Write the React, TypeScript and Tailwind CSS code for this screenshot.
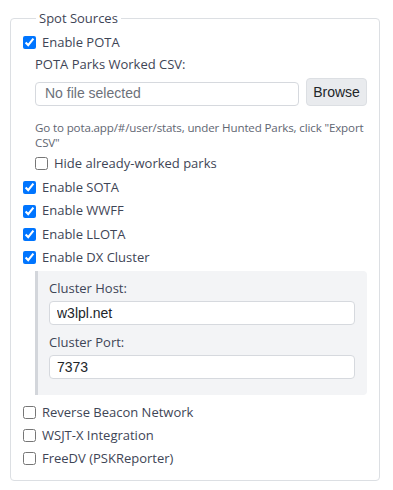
import { useState } from 'react';

interface CheckRowProps {
  label: string;
  checked: boolean;
  onChange: (v: boolean) => void;
  className?: string;
}

function CheckRow({ label, checked, onChange, className = '' }: CheckRowProps) {
  return (
    <label className={`flex items-center h-[23px] gap-[6px] text-[13px] text-[#3e4556] ${className}`}>
      <input
        type="checkbox"
        checked={checked}
        onChange={(e) => onChange(e.target.checked)}
        className="m-0 w-[13px] h-[13px] accent-[#0075ff]"
      />
      <span>{label}</span>
    </label>
  );
}

export default function App() {
  const [pota, setPota] = useState(true);
  const [hideWorked, setHideWorked] = useState(false);
  const [sota, setSota] = useState(true);
  const [wwff, setWwff] = useState(true);
  const [llota, setLlota] = useState(true);
  const [dx, setDx] = useState(true);
  const [rbn, setRbn] = useState(false);
  const [wsjt, setWsjt] = useState(false);
  const [freedv, setFreedv] = useState(false);
  const [host, setHost] = useState('w3lpl.net');
  const [port, setPort] = useState('7373');

  return (
    <div className="w-[393px] h-[490px] bg-white pt-[9px] font-['Open_Sans',sans-serif]">
      <fieldset className="ml-[10px] w-[370px] border border-[#dcdfe3] rounded-[4px] pl-[12px] pr-[12px] pb-[10px]">
        <legend className="ml-[13px] px-[3px] text-[13px] leading-[18px] text-[#3e4556]">Spot Sources</legend>

        {/* POTA */}
        <CheckRow label="Enable POTA" checked={pota} onChange={setPota} className="mt-[4px]" />
        <div className="pl-[12px]">
          <div className="h-[22px] flex items-center text-[13px] text-[#3e4556]">POTA Parks Worked CSV:</div>
          <div className="flex items-center gap-[7px] mt-[2px]">
            <div className="flex-1 h-[24px] mt-[3px] border border-[#d6d9de] rounded-[4px] px-[9px] flex items-center text-[14px] text-[#6c717a] font-['Liberation_Sans',sans-serif]">
              No file selected
            </div>
            <button className="h-[28px] w-[61px] rounded-[4px] bg-[#e9ebee] border border-[#dcdfe3] text-[14px] text-[#212529] font-['Liberation_Sans',sans-serif]">
              Browse
            </button>
          </div>
          <div className="mt-[14px] text-[11.6px] tracking-[-0.15px] leading-[15px] text-[#5f6672]">
            Go to pota.app/#/user/stats, under Hunted Parks, click "Export CSV"
          </div>
          <CheckRow label="Hide already-worked parks" checked={hideWorked} onChange={setHideWorked} className="mt-[2px]" />
        </div>

        <CheckRow label="Enable SOTA" checked={sota} onChange={setSota} className="mt-[1px]" />
        <CheckRow label="Enable WWFF" checked={wwff} onChange={setWwff} className="mt-[0.5px]" />
        <CheckRow label="Enable LLOTA" checked={llota} onChange={setLlota} className="mt-[0.5px]" />
        <CheckRow label="Enable DX Cluster" checked={dx} onChange={setDx} />

        {/* DX cluster settings */}
        <div className="ml-[12px] mt-[2px] bg-[#f3f4f6] border-l-[3px] border-[#d3d6db] rounded-r-[4px] pl-[11px] pr-[12px] pt-[9px] pb-[16px]">
          <div className="h-[18px] flex items-center text-[13px] text-[#3e4556]">Cluster Host:</div>
          <input
            value={host}
            onChange={(e) => setHost(e.target.value)}
            className="mt-[3px] w-full h-[24px] bg-white border border-[#d6d9de] rounded-[4px] px-[7px] text-[14px] text-[#212529] font-['Liberation_Sans',sans-serif] outline-none"
          />
          <div className="h-[18px] mt-[9px] flex items-center text-[13px] text-[#3e4556]">Cluster Port:</div>
          <input
            value={port}
            onChange={(e) => setPort(e.target.value)}
            className="mt-[3px] w-full h-[24px] bg-white border border-[#d6d9de] rounded-[4px] px-[7px] text-[14px] text-[#212529] font-['Liberation_Sans',sans-serif] outline-none"
          />
        </div>

        <CheckRow label="Reverse Beacon Network" checked={rbn} onChange={setRbn} className="mt-[6px]" />
        <CheckRow label="WSJT-X Integration" checked={wsjt} onChange={setWsjt} />
        <CheckRow label="FreeDV (PSKReporter)" checked={freedv} onChange={setFreedv} />
      </fieldset>
    </div>
  );
}
